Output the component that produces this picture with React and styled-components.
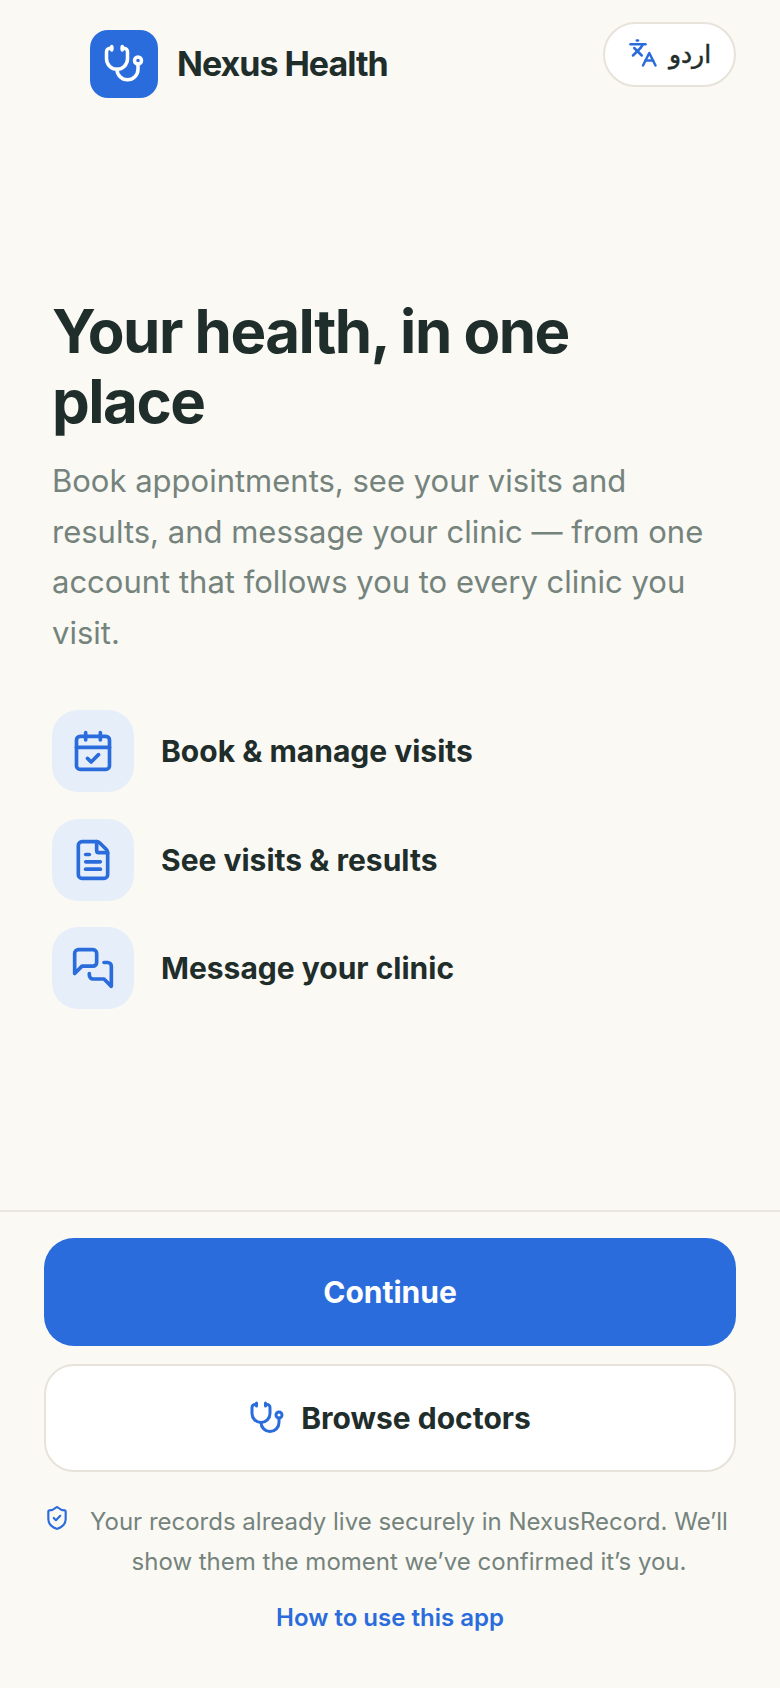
import React from 'react';
import styled, { createGlobalStyle } from 'styled-components';
import { Stethoscope, Languages, CalendarCheck, FileText, ShieldCheck } from 'lucide-react';

const Global = createGlobalStyle`
	html, body { margin: 0; padding: 0; background: #faf9f4; }
	* { box-sizing: border-box; }
	body { font-family: Inter, 'Noto Sans', sans-serif; color: #1f2d2b; }
`;

const blue = '#2b6cdc';

const Page = styled.div`
	width: 780px;
	height: 1688px;
	display: flex;
	flex-direction: column;
	background: #faf9f4;
`;

const Header = styled.header`
	display: flex;
	justify-content: space-between;
	align-items: flex-start;
	padding: 22px 44px 0 90px;
	height: 296px;
`;

const Brand = styled.div`
	display: flex;
	align-items: center;
	gap: 19px;
	margin-top: 8px;
`;

const LogoMark = styled.div`
	width: 68px;
	height: 68px;
	border-radius: 18px;
	background: ${blue};
	color: #fff;
	display: flex;
	align-items: center;
	justify-content: center;
`;

const BrandName = styled.span`
	font-size: 34px;
	font-weight: 700;
	letter-spacing: -1px;
	margin-top: -2px;
`;

const LangPill = styled.button`
	width: 133px;
	height: 65px;
	border-radius: 33px;
	border: 2px solid #e8e3da;
	background: #fff;
	color: #1f2d2b;
	display: flex;
	align-items: center;
	justify-content: center;
	gap: 11px;
	font-family: 'DejaVu Sans', sans-serif;
	font-size: 25px;
	font-weight: 400;
	-webkit-text-stroke: 0.5px #1f2d2b;
	padding: 0;
	svg { color: ${blue}; margin-top: -4px; }
`;

const Main = styled.main`
	flex: 1;
	padding: 0 52px;
`;

const Title = styled.h1`
	margin: 0 0 20px;
	font-size: 60px;
	line-height: 70px;
	font-weight: 700;
	letter-spacing: -1.5px;
`;

const Lead = styled.p`
	margin: 0 0 52px;
	font-size: 31px;
	line-height: 50.5px;
	color: #75837d;
`;

const Features = styled.ul`
	list-style: none;
	margin: 0;
	padding: 0;
	display: flex;
	flex-direction: column;
	gap: 26.5px;
`;

const Feature = styled.li`
	display: flex;
	align-items: center;
	gap: 27px;
	font-size: 30px;
	font-weight: 700;
`;

const FeatureIcon = styled.div`
	width: 82px;
	height: 82px;
	border-radius: 26px;
	background: #e6eff9;
	color: ${blue};
	display: flex;
	align-items: center;
	justify-content: center;
`;

const Footer = styled.footer`
	border-top: 2px solid #e8e6df;
	padding: 26px 44px 0;
	height: 478px;
	display: flex;
	flex-direction: column;
`;

const Button = styled.button`
	width: 100%;
	flex: none;
	height: 108px;
	border-radius: 30px;
	border: ${(p) => (p.$primary ? 'none' : '2px solid #e8e3da')};
	background: ${(p) => (p.$primary ? blue : '#fff')};
	color: ${(p) => (p.$primary ? '#fff' : '#1f2d2b')};
	font-family: inherit;
	font-size: 30px;
	font-weight: 700;
	display: flex;
	align-items: center;
	justify-content: center;
	gap: 16px;
	margin-bottom: 18px;
	svg { color: ${blue}; }
`;

const Note = styled.div`
	margin-top: 12px;
	display: flex;
	align-items: flex-start;
	gap: 20px;
	svg {
		flex: none;
		color: ${blue};
		margin-top: 3px;
	}
`;

const NoteText = styled.p`
	margin: 0;
	width: 638px;
	text-align: center;
	font-size: 24px;
	line-height: 40px;
	color: #75837d;
`;

const HelpLink = styled.a`
	margin-top: 21px;
	text-align: center;
	font-size: 24px;
	font-weight: 600;
	color: ${blue};
	text-decoration: none;
`;

// older lucide shape, the current package draws a wider first bubble
const MessagesIcon = ({ size }) => (
	<svg width={size} height={size} viewBox="0 0 24 24" fill="none" stroke="currentColor" strokeWidth="2" strokeLinecap="round" strokeLinejoin="round">
		<path d="M14 9a2 2 0 0 1-2 2H6l-4 4V4a2 2 0 0 1 2-2h8a2 2 0 0 1 2 2z" />
		<path d="M18 9h2a2 2 0 0 1 2 2v11l-4-4h-6a2 2 0 0 1-2-2v-1" />
	</svg>
);

export default function App() {
	return (
		<Page>
			<Global />
			<Header>
				<Brand>
					<LogoMark><Stethoscope size={42} strokeWidth={2} /></LogoMark>
					<BrandName>Nexus Health</BrandName>
				</Brand>
				<LangPill>
					<Languages size={30} strokeWidth={2} />
					<span dir="rtl" lang="ur">اردو</span>
				</LangPill>
			</Header>
			<Main>
				<Title>Your health, in one place</Title>
				<Lead>Book appointments, see your visits and results, and message your clinic — from one account that follows you to every clinic you visit.</Lead>
				<Features>
					<Feature><FeatureIcon><CalendarCheck size={44} strokeWidth={2} /></FeatureIcon>Book &amp; manage visits</Feature>
					<Feature><FeatureIcon><FileText size={44} strokeWidth={2} /></FeatureIcon>See visits &amp; results</Feature>
					<Feature><FeatureIcon><MessagesIcon size={44} /></FeatureIcon>Message your clinic</Feature>
				</Features>
			</Main>
			<Footer>
				<Button $primary>Continue</Button>
				<Button><Stethoscope size={36} strokeWidth={2} />Browse doctors</Button>
				<Note>
					<ShieldCheck size={26} strokeWidth={2} />
					<NoteText>Your records already live securely in NexusRecord. We’ll show them the moment we’ve confirmed it’s you.</NoteText>
				</Note>
				<HelpLink href="#">How to use this app</HelpLink>
			</Footer>
		</Page>
	);
}
